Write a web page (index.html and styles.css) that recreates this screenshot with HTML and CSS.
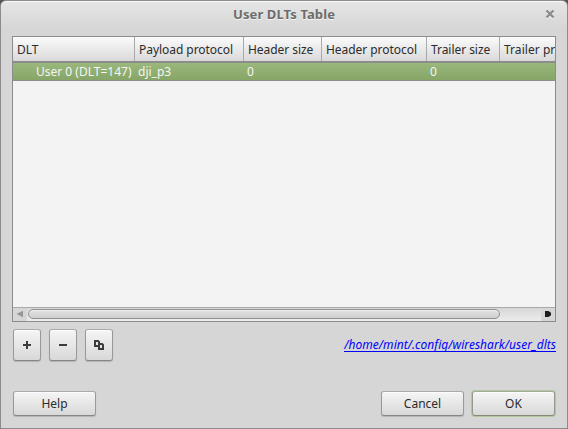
FILE: index.html
```html
<!DOCTYPE html>
<html lang="en">
<head>
<meta charset="utf-8">
<title>User DLTs Table</title>
<link rel="stylesheet" href="styles.css">
</head>
<body>
<div class="window">
  <header class="titlebar">
    <h1>User DLTs Table</h1>
    <svg class="close" width="10" height="10" viewBox="0 0 10 10"><path class="shine" d="M1.5 2.5l7 7M8.5 2.5l-7 7"/><path d="M1.5 1.5l7 7M8.5 1.5l-7 7"/></svg>
  </header>
  <main class="table">
    <div class="row head">
      <span>DLT</span><span>Payload protocol</span><span>Header size</span><span>Header protocol</span><span>Trailer size</span><span>Trailer protocol</span>
    </div>
    <div class="row selected">
      <span class="indent">User 0 (DLT=147)</span><span>dji_p3</span><span>0</span><span></span><span>0</span><span></span>
    </div>
    <div class="space"></div>
    <div class="scrollbar">
      <div class="arrow"><svg width="14" height="13" viewBox="0 0 14 13"><path fill="#969696" d="M3.500 6L10 2.700v6.600z"/></svg></div>
      <div class="track"><div class="thumb"></div></div>
      <div class="arrow"><svg width="14" height="13" viewBox="0 0 14 13"><path fill="#1c1c1c" d="M4 3h3.500L10 4.800v2.400L7.500 9H4z"/></svg></div>
    </div>
  </main>
  <div class="tools">
    <button class="tool"><svg width="10" height="10" viewBox="0 0 10 10"><path d="M1 4h8v2H1zM4 1h2v8H4z"/></svg></button>
    <button class="tool"><svg width="10" height="10" viewBox="0 0 10 10"><path d="M1 4h8v2H1z"/></svg></button>
    <button class="tool"><svg width="10" height="10" viewBox="0 0 10 10"><path fill-rule="evenodd" d="M0 0h4.500L6 1.500V7H0zM2 2v3h2V2z"/><path fill-rule="evenodd" d="M4 3h4.500L10 4.500V10H4zM6 5v3h2V5z"/></svg></button>
    <a class="path">/home/mint/.config/wireshark/user_dlts</a>
  </div>
  <footer class="actions">
    <button class="help">Help</button>
    <button>Cancel</button>
    <button class="default">OK</button>
  </footer>
</div>
</body>
</html>
```
FILE: styles.css
```css
* { box-sizing: border-box; }
body {
  margin: 0;
  background: #555;
  font: 12px/16px "Noto Sans", sans-serif;
  color: #2c2c2c;
}
.window {
  width: 568px;
  height: 429px;
  border: 1px solid #8c8c8c;
  border-radius: 6px 6px 0 0;
  background: linear-gradient(#e6e6e6, #d6d6d6 27px);
  box-shadow: inset 0 1px #fafafa;
  padding: 0 11px;
  overflow: hidden;
}
.titlebar {
  height: 35px;
  display: flex;
  align-items: flex-start;
  position: relative;
}
h1 {
  flex: 1;
  margin: 5px 0 0;
  font-size: 13px;
  line-height: 17px;
  font-weight: bold;
  letter-spacing: 0.1px;
  text-align: center;
  color: #6c6c6c;
  text-shadow: 0 1px #f4f4f4;
}
.close {
  position: absolute;
  right: 1px;
  top: 8px;
  fill: none;
  stroke: #8c8c8c;
  stroke-width: 2.4;
}
.close .shine { stroke: #f4f4f4; }
.table {
  width: 544px;
  height: 286px;
  border: 1px solid #8c8c8c;
  background: #f3f3f3;
  display: flex;
  flex-direction: column;
  overflow: hidden;
}
.row {
  display: grid;
  grid-template-columns: 122px 109px 78px 105px 73px 110px;
  flex: none;
  white-space: nowrap;
}
.head {
  height: 26px;
  border-bottom: 2px solid #8c8c8c;
  background: linear-gradient(#fbfbfb, #d9d9d9);
  letter-spacing: -0.05px;
}
.head span {
  padding: 5px 0 0 4px;
  border-right: 1px solid #a9a9a9;
}
.head span:last-child { letter-spacing: 0.04px; }
.selected {
  height: 18px;
  border-bottom: 1px solid #8c8c8c;
  background: linear-gradient(#9ab87c, #86a567);
  color: #f5f5f5;
}
.selected span { padding: 1px 0 0 3px; }
.selected .indent { padding-left: 23px; }
.space { flex: 1; }
.scrollbar {
  height: 14px;
  border-top: 1px solid #a9a9a9;
  display: flex;
}
.arrow { width: 14px; height: 13px; background: #d6d6d6; }
.arrow svg { display: block; }
.track {
  flex: 1;
  padding: 1px;
  background: linear-gradient(#d7d7d7, #ededed);
}
.thumb {
  width: 472px;
  height: 10px;
  border: 1px solid #929292;
  border-radius: 5px;
  background: linear-gradient(#e3e3e3, #cfcfcf);
  box-shadow: inset 0 1px #eee;
}
.tools {
  display: flex;
  gap: 8px;
  padding: 7px 0 0 1px;
}
button {
  width: 83px;
  height: 25px;
  padding: 0;
  border: 1px solid #999;
  border-color: #aaa #999 #858585;
  border-radius: 3px;
  background: linear-gradient(#f5f5f5, #d8d8d8);
  box-shadow: inset 0 1px #fcfcfc, 0 1px 1px #b4b4b4;
  font: inherit;
  line-height: 23px;
  color: inherit;
}
.tool {
  width: 28px;
  height: 32px;
  display: flex;
  align-items: center;
  justify-content: center;
}
.tool svg { fill: #3c3c3c; }
.path {
  margin: 8px 0 0 auto;
  height: 15px;
  font-style: italic;
  letter-spacing: 0.02px;
  color: #00f;
  border-bottom: 1px solid #00f;
}
.actions {
  display: flex;
  gap: 8px;
  padding: 30px 1px 0;
}
.help { margin-right: auto; }
.default {
  border-color: #a2aa99 #929b89 #818b77;
  box-shadow: inset 0 1px #fcfcfc, 0 0 0 1px #b3c79e;
}
```
